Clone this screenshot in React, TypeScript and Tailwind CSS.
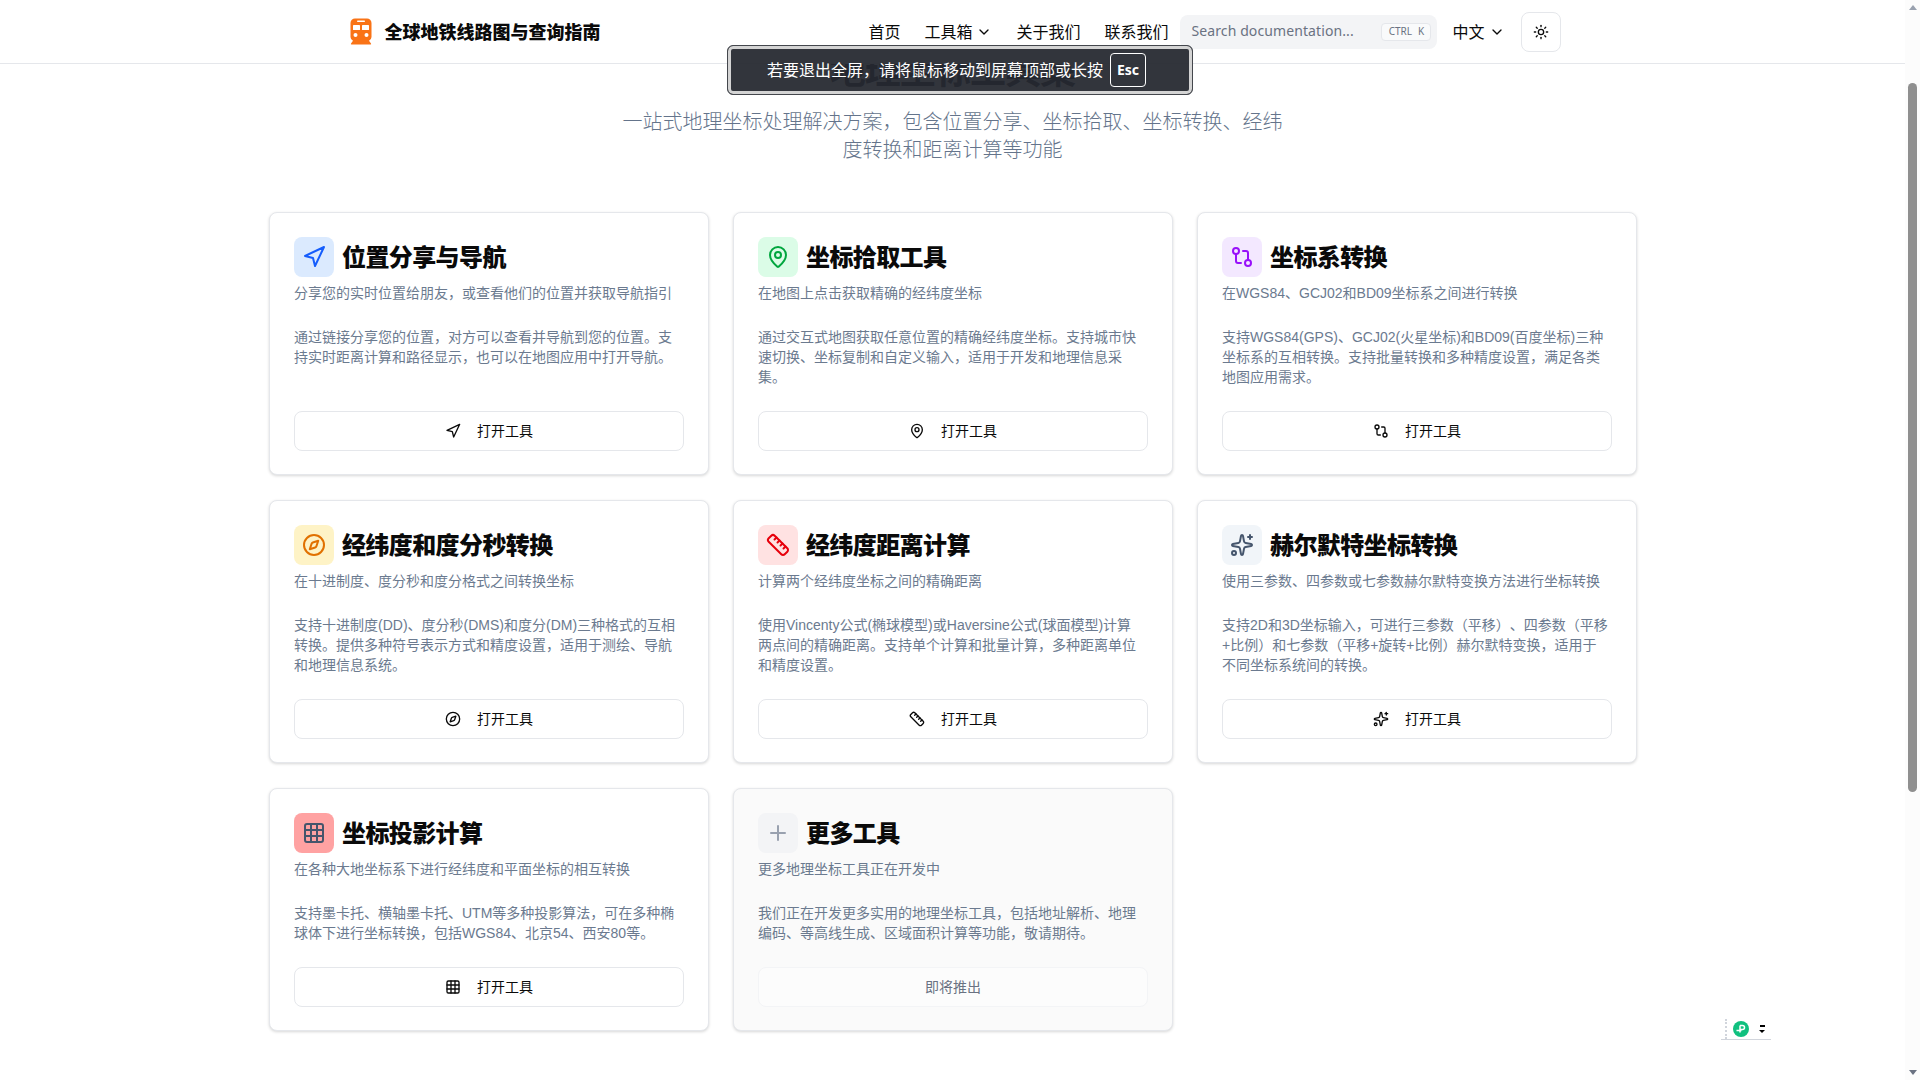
import React from 'react';
import {
  ChevronDown,
  Compass,
  GitCompare,
  Grid3x3,
  MapPin,
  Navigation,
  Plus,
  Ruler,
  Sparkles,
  Sun,
} from 'lucide-react';

type Tool = {
  title: string;
  subtitle: string;
  body: string;
  icon: React.ElementType;
  tile: string;
  tint: string;
};

const tools: Tool[] = [
  {
    title: '位置分享与导航',
    subtitle: '分享您的实时位置给朋友，或查看他们的位置并获取导航指引',
    body: '通过链接分享您的位置，对方可以查看并导航到您的位置。支持实时距离计算和路径显示，也可以在地图应用中打开导航。',
    icon: Navigation,
    tile: 'bg-blue-100',
    tint: 'text-blue-600',
  },
  {
    title: '坐标拾取工具',
    subtitle: '在地图上点击获取精确的经纬度坐标',
    body: '通过交互式地图获取任意位置的精确经纬度坐标。支持城市快速切换、坐标复制和自定义输入，适用于开发和地理信息采集。',
    icon: MapPin,
    tile: 'bg-green-100',
    tint: 'text-green-600',
  },
  {
    title: '坐标系转换',
    subtitle: '在WGS84、GCJ02和BD09坐标系之间进行转换',
    body: '支持WGS84(GPS)、GCJ02(火星坐标)和BD09(百度坐标)三种\n坐标系的互相转换。支持批量转换和多种精度设置，满足各类地图应用需求。',
    icon: GitCompare,
    tile: 'bg-purple-100',
    tint: 'text-purple-600',
  },
  {
    title: '经纬度和度分秒转换',
    subtitle: '在十进制度、度分秒和度分格式之间转换坐标',
    body: '支持十进制度(DD)、度分秒(DMS)和度分(DM)三种格式的互相转换。提供多种符号表示方式和精度设置，适用于测绘、导航和地理信息系统。',
    icon: Compass,
    tile: 'bg-amber-100',
    tint: 'text-amber-600',
  },
  {
    title: '经纬度距离计算',
    subtitle: '计算两个经纬度坐标之间的精确距离',
    body: '使用Vincenty公式(椭球模型)或Haversine公式(球面模型)计算\n两点间的精确距离。支持单个计算和批量计算，多种距离单位和精度设置。',
    icon: Ruler,
    tile: 'bg-red-100',
    tint: 'text-red-600',
  },
  {
    title: '赫尔默特坐标转换',
    subtitle: '使用三参数、四参数或七参数赫尔默特变换方法进行坐标转换',
    body: '支持2D和3D坐标输入，可进行三参数（平移）、四参数（平移+比例）和七参数（平移+旋转+比例）赫尔默特变换，适用于\n不同坐标系统间的转换。',
    icon: Sparkles,
    tile: 'bg-slate-100',
    tint: 'text-slate-600',
  },
  {
    title: '坐标投影计算',
    subtitle: '在各种大地坐标系下进行经纬度和平面坐标的相互转换',
    body: '支持墨卡托、横轴墨卡托、UTM等多种投影算法，可在多种椭球体下进行坐标转换，包括WGS84、北京54、西安80等。',
    icon: Grid3x3,
    tile: 'bg-red-300',
    tint: 'text-slate-600',
  },
];

function MetroLogo() {
  return (
    <svg viewBox="0 0 32 32" className="w-8 h-8 shrink-0">
      <path
        d="M10 2.5h12a4.5 4.5 0 0 1 4.5 4.5v14a4 4 0 0 1-2.5 3.7l2 2.8a.6.6 0 0 1-.5.9H6.5a.6.6 0 0 1-.5-.9l2-2.8A4 4 0 0 1 5.500 21V7A4.5 4.5 0 0 1 10 2.5z"
        fill="#f97316"
      />
      <rect x="8" y="9" width="7" height="5" rx="0.6" fill="#fff" />
      <rect x="17" y="9" width="7" height="5" rx="0.6" fill="#fff" />
      <rect x="12" y="4.5" width="8" height="1.5" rx="0.7" fill="#fff" />
      <circle cx="10.5" cy="19" r="2" fill="#fff" />
      <circle cx="21.5" cy="19" r="2" fill="#fff" />
    </svg>
  );
}

function ToolCard({ tool }: { tool: Tool }) {
  const Icon = tool.icon;
  return (
    <div className="flex flex-col rounded-lg border border-gray-200 bg-white px-6 pt-6 pb-[23px] shadow-[0_1px_3px_rgba(0,0,0,0.16)]">
      <div className="flex items-center gap-2">
        <div className={`flex w-10 h-10 items-center justify-center rounded-lg ${tool.tile}`}>
          <Icon className={`w-6 h-6 ${tool.tint}`} />
        </div>
        <h2 className="pt-[2px] text-2xl leading-8 font-extrabold tracking-tight text-[#0a0a0a]">{tool.title}</h2>
      </div>
      <p className="mt-1.5 text-sm leading-5 text-[#6b7a8f]">{tool.subtitle}</p>
      <p className="mt-6 mb-6 text-sm leading-5 whitespace-pre-line text-[#6b7a8f]">{tool.body}</p>
      <button className="mt-auto flex h-10 items-center justify-center gap-4 rounded-lg border border-gray-200 bg-white text-sm text-[#0a0a0a]">
        <Icon className="w-4 h-4" />
        打开工具
      </button>
    </div>
  );
}

export default function App() {
  return (
    <div
      className="relative flex h-screen overflow-hidden bg-white text-[#0a0a0a] [text-spacing-trim:space-all]"
      style={{ fontFamily: '"Liberation Sans", "Noto Sans CJK SC", sans-serif' }}
    >
      <div className="flex-1 min-w-0">
        {/* Top bar */}
        <header className="relative z-10 h-16 border-b border-gray-200 bg-white font-['Noto_Sans','Noto_Sans_CJK_SC',sans-serif]">
          <div className="mx-auto flex h-full max-w-7xl items-center justify-between px-8">
            <div className="flex items-center gap-2">
              <MetroLogo />
              <span className="text-lg font-extrabold">全球地铁线路图与查询指南</span>
            </div>
            <div className="flex items-center">
              <nav className="flex items-center gap-6 text-base">
                <a>首页</a>
                <a className="flex items-center gap-1">
                  工具箱
                  <ChevronDown className="w-4 h-4" />
                </a>
                <a>关于我们</a>
                <a>联系我们</a>
              </nav>
              <div className="ml-3 flex h-[34px] w-[257px] items-center justify-between rounded-lg bg-gray-100 pl-[11px] pr-[6px]">
                <span className="pb-[2px] text-sm tracking-[0.1px] text-gray-500">Search documentation...</span>
                <kbd className="flex h-[18px] w-[50px] items-center justify-center gap-1.5 rounded border border-gray-200 bg-gray-50 text-[10px] text-gray-500 font-sans">
                  <span>CTRL</span>
                  <span>K</span>
                </kbd>
              </div>
              <button className="ml-[15px] flex items-center gap-1 text-base">
                中文
                <ChevronDown className="w-4 h-4" />
              </button>
              <button className="ml-4 flex w-10 h-10 items-center justify-center rounded-lg border border-gray-200 bg-white">
                <Sun className="w-4 h-4" />
              </button>
            </div>
          </div>
        </header>

        {/* Hero, already scrolled a little under the top bar */}
        <main className="-mt-3">
          <div className="text-center">
            <h1 className="text-4xl leading-10 font-bold tracking-tight text-[#111827]">地理坐标工具集</h1>
            <p className="mx-auto mt-4 max-w-2xl text-xl leading-7 font-light text-[#64748b]">
              一站式地理坐标处理解决方案，包含位置分享、坐标拾取、坐标转换、经纬度转换和距离计算等功能
            </p>
          </div>
          <div className="ml-[269px] mt-12 grid w-[1368px] grid-cols-3 gap-x-6 gap-y-[25px]">
            {tools.map((tool) => (
              <ToolCard key={tool.title} tool={tool} />
            ))}
            <div className="flex flex-col rounded-lg border border-gray-200 bg-[#fafafa] px-6 pt-6 pb-[23px] shadow-[0_1px_3px_rgba(0,0,0,0.16)]">
              <div className="flex items-center gap-2">
                <div className="flex w-10 h-10 items-center justify-center rounded-lg bg-gray-100">
                  <Plus className="w-6 h-6 text-gray-400" />
                </div>
                <h2 className="pt-[2px] text-2xl leading-8 font-extrabold tracking-tight">更多工具</h2>
              </div>
              <p className="mt-1.5 text-sm leading-5 text-[#6b7a8f]">更多地理坐标工具正在开发中</p>
              <p className="mt-6 mb-6 text-sm leading-5 text-[#6b7a8f]">
                我们正在开发更多实用的地理坐标工具，包括地址解析、地理编码、等高线生成、区域面积计算等功能，敬请期待。
              </p>
              <button className="mt-auto flex h-10 items-center justify-center rounded-lg border border-gray-100 bg-[#fcfcfc] text-sm text-gray-500">
                即将推出
              </button>
            </div>
          </div>
        </main>
      </div>

      {/* Scrollbar rail */}
      <div className="flex w-[15px] shrink-0 flex-col items-center bg-[#fcfcfc]">
        <div className="mt-[5px] h-0 w-0 border-x-[4px] border-b-[5px] border-x-transparent border-b-gray-400" />
        <div className="mt-[73px] h-[709px] w-[9px] rounded-full bg-[#8f8f8f]" />
        <div className="mt-auto mb-[5px] h-0 w-0 border-x-[4px] border-t-[5px] border-x-transparent border-t-gray-500" />
      </div>

      {/* Browser fullscreen notice */}
      <div className="absolute left-[727px] top-[45px] z-20 flex h-[50px] w-[466px] items-center rounded-md border border-[#44474d] bg-[#252830]/[0.94] pl-[39px] font-['Noto_Sans','Noto_Sans_CJK_SC',sans-serif] text-white shadow-[inset_0_0_0_3px_#d4d4d4]">
        <span className="text-base whitespace-nowrap">若要退出全屏，请将鼠标移动到屏幕顶部或长按</span>
        <kbd className="ml-[7px] flex h-[34px] w-[36px] items-center justify-center rounded border border-white text-sm font-bold font-sans">
          Esc
        </kbd>
      </div>

      {/* Floating widget, bottom right */}
      <div className="absolute left-[1721px] top-[1019px] flex h-[21px] w-[50px] border-b border-gray-300">
        <div className="ml-[4px] h-5 w-px border-l-2 border-dotted border-gray-300" />
        <svg viewBox="0 0 16 16" className="ml-[6px] w-4 h-4 mt-[2px]">
          <circle cx="8" cy="8" r="8" fill="#10c07f" />
          <path d="M3.5 9.5h5M7 4.5v7M7 4.5h2.5a2 2 0 0 1 0 4H7" fill="none" stroke="#fff" strokeWidth="1.5" />
        </svg>
        <div className="ml-[10px] flex flex-col items-center pt-[6px]">
          <div className="h-[2px] w-[5px] bg-black" />
          <div className="mt-[3px] h-0 w-0 border-x-[3px] border-t-[3px] border-x-transparent border-t-black" />
        </div>
      </div>
    </div>
  );
}
